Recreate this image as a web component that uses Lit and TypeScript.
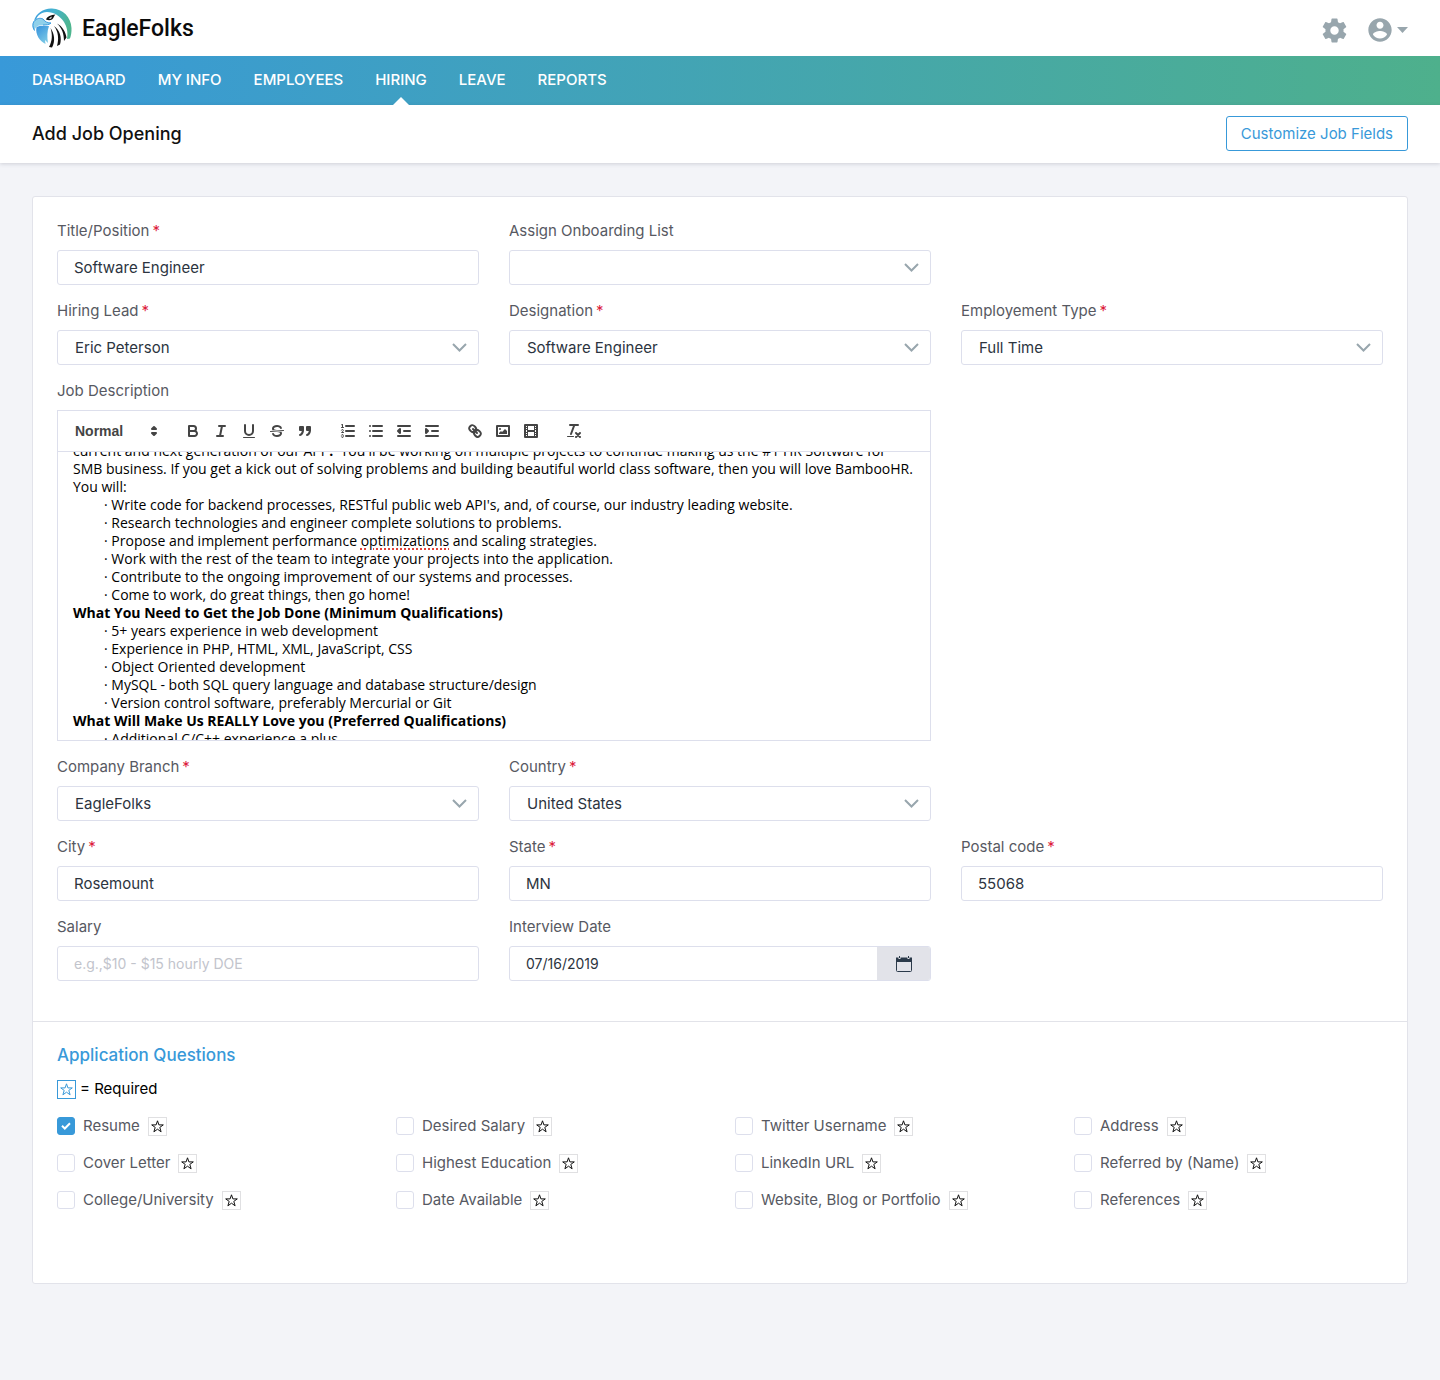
import { LitElement, html, css, svg, nothing } from "lit";
import { customElement, property } from "lit/decorators.js";

const NAV = ["DASHBOARD", "MY INFO", "EMPLOYEES", "HIRING", "LEAVE", "REPORTS"];

const QUESTIONS = [
  "Resume",
  "Desired Salary",
  "Twitter Username",
  "Address",
  "Cover Letter",
  "Highest Education",
  "LinkedIn URL",
  "Referred by (Name)",
  "College/University",
  "Date Available",
  "Website, Blog or Portfolio",
  "References",
];

const sharedStyles = css`
  *,
  *::before,
  *::after {
    box-sizing: border-box;
  }
  button,
  input,
  select {
    font: inherit;
    color: inherit;
    margin: 0;
  }
  button {
    background: none;
    border: 0;
    padding: 0;
    cursor: pointer;
  }
  svg {
    display: block;
  }
`;

@customElement("eagle-header")
export class EagleHeader extends LitElement {
  static styles = [
    sharedStyles,
    css`
      :host {
        display: block;
      }
      .top {
        display: flex;
        align-items: center;
        justify-content: space-between;
        height: 56px;
        padding: 0 32px;
        background: #fff;
      }
      .brand {
        display: flex;
        align-items: center;
        gap: 10px;
        color: #0b0b0b;
        text-decoration: none;
        font: 500 23px/28px Roboto, sans-serif;
      }
      .name {
        padding-top: 2px;
      }
      .tools {
        display: flex;
        align-items: center;
        gap: 17px;
        padding-top: 4px;
        color: #98a6ad;
      }
      .account {
        display: flex;
        align-items: center;
        gap: 3px;
      }
      .nav {
        display: flex;
        gap: 32px;
        height: 49px;
        padding: 0 32px;
        background: linear-gradient(90deg, #3899d9, #4eb08c);
      }
      .link {
        position: relative;
        color: #fff;
        text-decoration: none;
        font-weight: 500;
        font-size: 15px;
        line-height: 48px;
      }
      .link.active::after {
        content: "";
        position: absolute;
        left: 50%;
        bottom: 0;
        margin-left: -8px;
        border: 8px solid transparent;
        border-top: 0;
        border-bottom-color: #fff;
      }
    `,
  ];

  render() {
    return html`
      <header>
        <div class="top">
          <a class="brand" href="#">
            <svg width="40" height="40" viewBox="0 0 40 40" aria-hidden="true">
              <defs>
                <linearGradient id="crest" x1="0" y1="0" x2="1" y2="0.3">
                  <stop offset="0" stop-color="#3b9be0" />
                  <stop offset="0.5" stop-color="#45b3cf" />
                  <stop offset="1" stop-color="#4db58f" />
                </linearGradient>
                <linearGradient id="throat" x1="0" y1="0" x2="0.6" y2="1">
                  <stop offset="0" stop-color="#3390dc" />
                  <stop offset="1" stop-color="#7cc9e6" />
                </linearGradient>
              </defs>
              <path
                fill="url(#crest)"
                d="M2 13C4 5 12 0 20 0.500 31 1 39 9 39.500 20c.2 4-.5 8-1.500 10.500l-3 .5c1-7 0-12-3-17C28 8 22 4 15 4 9 4 5 8 4.500 11Z"
              />
              <path fill="#8fd0ea" d="M1 14C4 10 8 9.500 11 11c2 3 5 4 8 4-2 2-5 2-8 2C6 17 3 19 2.500 23 0 20 0 17 1 14Z" />
              <path fill="none" stroke="#3b9be0" d="M2.500 22.500C.5 19 .5 16 2 13.500 5 10 8 9.800 11 11c2 3 5 4 8 4-2 2-5 2-8 2" />
              <path fill="url(#throat)" d="M4.500 19C9 17 12 18 17 18c-2 5-2 11-1 17l-3-3 .5 4C8 33 3 27 4.500 19Z" />
              <path fill="#111" d="M14 11.500C15 8.500 19 7 23.500 6.500 22 7.500 22 10 20 11.500c-2 1-4 .8-6 0Z" />
              <path fill="#fff" d="M16.500 10.500l3.500-2-1 2.200Z" />
              <g fill="#111">
                <path d="M18.500 20c2 6 2 13-1.500 19l3 .5c3.500-6 2.500-14-1.500-19.500Z" />
                <path d="M22 18c4.500 6 5 13 3 20l3-1.500c2-7 0-14-6-18.500Z" />
                <path d="M25 15.500c5 4.500 7 10.500 7 17.500l2.500-3.500c-1-6-4-11-9.500-14Z" />
              </g>
            </svg>
            <span class="name">EagleFolks</span>
          </a>
          <div class="tools">
            <button aria-label="Settings">
              <svg width="29" height="29" viewBox="0 0 24 24" fill="currentColor" aria-hidden="true">
                <path
                  d="M19.43 12.98c.04-.32.07-.64.07-.98s-.03-.66-.07-.98l2.11-1.65c.19-.15.24-.42.12-.64l-2-3.46c-.12-.22-.39-.3-.61-.22l-2.49 1c-.52-.4-1.08-.73-1.69-.98l-.38-2.65C14.46 2.18 14.25 2 14 2h-4c-.25 0-.46.18-.49.42l-.38 2.65c-.61.25-1.17.59-1.69.98l-2.49-1c-.23-.09-.49 0-.61.22l-2 3.46c-.13.22-.07.49.12.64l2.11 1.65c-.04.32-.07.65-.07.98s.03.66.07.98l-2.11 1.65c-.19.15-.24.42-.12.64l2 3.46c.12.22.39.3.61.22l2.49-1c.52.4 1.08.73 1.69.98l.38 2.65c.03.24.24.42.49.42h4c.25 0 .46-.18.49-.42l.38-2.65c.61-.25 1.17-.59 1.69-.98l2.49 1c.23.09.49 0 .61-.22l2-3.46c.12-.22.07-.49-.12-.64l-2.11-1.65zM12 15.500c-1.930 0-3.500-1.570-3.500-3.500s1.570-3.500 3.500-3.500 3.500 1.570 3.500 3.500-1.570 3.500-3.500 3.500z"
                />
              </svg>
            </button>
            <button class="account" aria-label="Account">
              <svg width="28" height="28" viewBox="0 0 24 24" fill="currentColor" aria-hidden="true">
                <path
                  d="M12 2C6.48 2 2 6.48 2 12s4.48 10 10 10 10-4.48 10-10S17.52 2 12 2zm0 3c1.66 0 3 1.34 3 3s-1.34 3-3 3-3-1.34-3-3 1.34-3 3-3zm0 14.2c-2.5 0-4.71-1.28-6-3.22.03-1.99 4-3.08 6-3.08 1.99 0 5.97 1.09 6 3.08-1.29 1.94-3.5 3.22-6 3.22z"
                />
              </svg>
              <svg width="11" height="6" viewBox="0 0 11 6" fill="currentColor" aria-hidden="true">
                <path d="M0 0h11L5.500 6z" />
              </svg>
            </button>
          </div>
        </div>
        <nav class="nav">
          ${NAV.map(
            (name) => html`<a class="link ${name === "HIRING" ? "active" : ""}" href="#">${name}</a>`,
          )}
        </nav>
      </header>
    `;
  }
}

const lines = (x1: number, ys: number[]) =>
  ys.map((y) => svg`<line class="s" x1=${x1} x2="15" y1=${y} y2=${y}></line>`);

const TOOL_GROUPS = [
  [
    {
      name: "Bold",
      icon: svg`<path class="s" d="M5,4H9.5A2.5,2.5,0,0,1,12,6.500v0A2.5,2.5,0,0,1,9.500,9H5V4Z"/><path class="s" d="M5,9h5.500A2.500,2.500,0,0,1,13,11.500v0A2.500,2.500,0,0,1,10.500,14H5V9Z"/>`,
    },
    {
      name: "Italic",
      icon: svg`<path class="s" d="M7,4H13M5,14H11M8,14L10,4"/>`,
    },
    {
      name: "Underline",
      icon: svg`<path class="s" d="M5,3V9a4.012,4.012,0,0,0,4,4H9a4.012,4.012,0,0,0,4-4V3"/><rect class="f" height="1" rx="0.5" width="12" x="3" y="15"/>`,
    },
    {
      name: "Strikethrough",
      icon: svg`<path class="s t" d="M15.5,8.5L2.5,9.5"/><path class="f" d="M9.007,8C6.542,7.791,6,7.519,6,6.5,6,5.792,7.283,5,9,5c1.571,0,2.765.679,2.969,1.309a1,1,0,0,0,1.9-.617C13.356,4.106,11.354,3,9,3,6.2,3,4,4.538,4,6.5a3.2,3.2,0,0,0,.5,1.843Z"/><path class="f" d="M8.984,10C11.457,10.208,12,10.479,12,11.5c0,0.708-1.283,1.5-3,1.5-1.571,0-2.765-.679-2.969-1.309a1,1,0,1,0-1.9.617C4.644,13.894,6.646,15,9,15c2.8,0,5-1.538,5-3.5a3.2,3.2,0,0,0-.5-1.843Z"/>`,
    },
    {
      name: "Quote",
      icon: svg`<path class="s f" d="M4,5h3v3h-3zM11,5h3v3h-3z"/><path class="s f" d="M7,8c0,4.031-3,5-3,5M14,8c0,4.031-3,5-3,5"/>`,
    },
  ],
  [
    {
      name: "Numbered list",
      icon: svg`${lines(7, [4, 9, 14])}<path class="s t" d="M2.500,5.500H4.500"/><path class="f" d="M3.5,6A0.5,0.5,0,0,1,3,5.5V3.085l-0.276.138A0.5,0.5,0,0,1,2.053,3c-0.124-.247-0.023-0.324.224-0.447l1-.5A0.5,0.5,0,0,1,4,2.5v3A0.5,0.5,0,0,1,3.5,6Z"/><path class="s t" d="M4.5,10.5h-2c0-.234,1.85-1.076,1.85-2.234A0.959,0.959,0,0,0,2.5,8.156"/><path class="s t" d="M2.5,14.846a0.959,0.959,0,0,0,1.85-.109A0.7,0.7,0,0,0,3.75,14a0.688,0.688,0,0,0,.6-0.736,0.959,0.959,0,0,0-1.85-.109"/>`,
    },
    {
      name: "Bulleted list",
      icon: svg`${lines(6, [4, 9, 14])}<path class="s" d="M3,4V4M3,9V9M3,14V14"/>`,
    },
    {
      name: "Decrease indent",
      icon: svg`${lines(3, [4, 14])}${lines(9, [9])}<path class="s f" d="M5 7V11L3 9Z"/>`,
    },
    {
      name: "Increase indent",
      icon: svg`${lines(3, [4, 14])}${lines(9, [9])}<path class="s f" d="M3 7V11L5 9Z"/>`,
    },
  ],
  [
    {
      name: "Link",
      icon: svg`<path class="s" d="M7,7L11,11"/><path class="s" d="M8.9,4.577a3.476,3.476,0,0,1,.36,4.679A3.476,3.476,0,0,1,4.577,8.9C3.185,7.5,2.035,6.4,4.217,4.217S7.5,3.185,8.9,4.577Z"/><path class="s" d="M13.423,9.1a3.476,3.476,0,0,0-4.679-.36,3.476,3.476,0,0,0,.36,4.679c1.392,1.392,2.5,2.542,4.679.36S14.815,10.5,13.423,9.1Z"/>`,
    },
    {
      name: "Image",
      icon: svg`<rect class="s" height="10" width="12" x="3" y="4"/><circle class="f" cx="6" cy="7" r="1"/><path class="f" d="M5 12V11L7 9 8 10 11 7 13 9V12Z"/>`,
    },
    {
      name: "Video",
      icon: svg`<rect class="s" height="12" width="12" x="3" y="3"/><path class="f" d="M5 3h1v12h-1zM12 3h1v12h-1zM5 8h8v2h-8zM3 5h3v1h-3zM3 7h3v1h-3zM3 10h3v1h-3zM3 12h3v1h-3zM12 5h3v1h-3zM12 7h3v1h-3zM12 10h3v1h-3zM12 12h3v1h-3z"/>`,
    },
  ],
  [
    {
      name: "Clear formatting",
      icon: svg`<path class="s" d="M5,3H13M6,12L9.350,3M11,11L15,15M15,11L11,15"/><rect class="f" height="1" rx="0.5" width="7" x="2" y="14"/>`,
    },
  ],
];

@customElement("rich-editor")
export class RichEditor extends LitElement {
  static styles = [
    sharedStyles,
    css`
      :host {
        display: block;
        border: 1px solid #dddfec;
      }
      .toolbar {
        display: flex;
        flex-wrap: wrap;
        gap: 15px;
        padding: 8px;
        border-bottom: 1px solid #dddfec;
        color: #444;
      }
      .group {
        display: flex;
      }
      .tool {
        padding: 3px 5px;
      }
      .icon {
        width: 18px;
        height: 18px;
      }
      .s {
        fill: none;
        stroke: currentColor;
        stroke-linecap: round;
        stroke-linejoin: round;
        stroke-width: 2;
      }
      .f {
        fill: currentColor;
      }
      .t {
        stroke-width: 1;
      }
      .picker {
        display: grid;
        align-items: center;
        width: 98px;
      }
      .picker > * {
        grid-area: 1 / 1;
      }
      .picker .icon {
        justify-self: end;
        margin-right: 1px;
        pointer-events: none;
      }
      .format {
        appearance: none;
        width: 100%;
        height: 24px;
        padding: 0 0 0 9px;
        border: 0;
        background: none;
        font: 700 14px/24px "Liberation Sans", sans-serif;
      }
      .body {
        height: 288px;
        padding: 12px 15px;
        overflow-y: auto;
        scrollbar-width: none;
        outline: 0;
        color: #000;
        font-family: "Open Sans", sans-serif;
        font-size: 14px;
        line-height: 18px;
        white-space: nowrap;
      }
      .body p,
      .body ul {
        margin: 0;
        padding: 0;
      }
      .body ul {
        padding-left: 31px;
        list-style: none;
      }
      .misspelt {
        text-decoration: underline dotted #e0443c 2px;
        text-underline-offset: 2px;
      }
    `,
  ];

  firstUpdated() {
    this.renderRoot.querySelector(".body")!.scrollTop = 22;
  }

  render() {
    return html`
      <div class="toolbar" role="toolbar" aria-label="Formatting">
        <div class="picker">
          <select class="format" aria-label="Text style">
            <option>Normal</option>
          </select>
          <svg class="icon" viewBox="0 0 18 18" aria-hidden="true">
            <path class="s f" d="M7 11L9 13 11 11ZM7 7L9 5 11 7Z" />
          </svg>
        </div>
        ${TOOL_GROUPS.map(
          (group) => html`<div class="group">
            ${group.map(
              (tool) => html`<button class="tool" type="button" aria-label=${tool.name}>
                <svg class="icon" viewBox="0 0 18 18" aria-hidden="true">${tool.icon}</svg>
              </button>`,
            )}
          </div>`,
        )}
      </div>
      <div class="body" contenteditable="true" spellcheck="false" role="textbox" aria-multiline="true" aria-label="Job Description">
        <p>current and next generation of our APP<b>.</b>&nbsp; You'll be working on multiple projects to continue making us the #1 HR Software for</p>
        <p>SMB business. If you get a kick out of solving problems and building beautiful world class software, then you will love BambooHR.</p>
        <p>You will:</p>
        <ul>
          <li>· Write code for backend processes, RESTful public web API's, and, of course, our industry leading website.</li>
          <li>· Research technologies and engineer complete solutions to problems.</li>
          <li>· Propose and implement performance <span class="misspelt">optimizations</span> and scaling strategies.</li>
          <li>· Work with the rest of the team to integrate your projects into the application.</li>
          <li>· Contribute to the ongoing improvement of our systems and processes.</li>
          <li>· Come to work, do great things, then go home!</li>
        </ul>
        <p><b>What You Need to Get the Job Done (Minimum Qualifications)</b></p>
        <ul>
          <li>· 5+ years experience in web development</li>
          <li>· Experience in PHP, HTML, XML, JavaScript, CSS</li>
          <li>· Object Oriented development</li>
          <li>· MySQL - both SQL query language and database structure/design</li>
          <li>· Version control software, preferably Mercurial or Git</li>
        </ul>
        <p><b>What Will Make Us REALLY Love you (Preferred Qualifications)</b></p>
        <ul>
          <li>· Additional C/C++ experience a plus</li>
        </ul>
      </div>
    `;
  }
}

@customElement("form-field")
export class FormField extends LitElement {
  @property() label = "";
  @property() value = "";
  @property() placeholder = "";
  @property() kind: "text" | "select" | "date" = "text";
  @property({ type: Boolean }) required = false;

  static styles = [
    sharedStyles,
    css`
      :host {
        display: flex;
        flex-direction: column;
        gap: 9px;
      }
      .label {
        display: flex;
        gap: 3px;
        line-height: 20px;
        color: #575962;
      }
      .mark {
        color: #dc1c3c;
      }
      .control {
        display: grid;
        grid-template-columns: minmax(0, 1fr) auto;
        height: 35px;
        border: 1px solid #dddfec;
        border-radius: 3px;
        background: #fff;
        color: #2c3440;
        overflow: hidden;
      }
      .box {
        grid-area: 1 / 1 / 2 / 3;
        width: 100%;
        min-width: 0;
        padding: 0 16px;
        border: 0;
        background: none;
        outline: 0;
      }
      select.box {
        appearance: none;
        padding: 0 17px;
      }
      .date .box {
        grid-area: 1 / 1;
        font-size: 14px;
      }
      .box::placeholder {
        color: #c2c4cc;
        font-size: 14px;
        opacity: 1;
      }
      .chevron {
        grid-area: 1 / 2;
        align-self: center;
        margin-right: 11px;
        pointer-events: none;
      }
      .pick {
        display: grid;
        place-items: center;
        width: 53px;
        background: #e2e3e9;
      }
    `,
  ];

  render() {
    return html`
      <label class="label" for="control"
        ><span>${this.label}</span>${this.required ? html`<span class="mark">*</span>` : nothing}</label
      >
      <div class="control ${this.kind}">
        ${this.kind === "select"
          ? html`<select class="box" id="control">
                <option>${this.value}</option>
              </select>
              <svg class="chevron" width="15" height="9" viewBox="0 0 15 9" fill="none" stroke="#98a6ad" stroke-width="2" aria-hidden="true">
                <path d="M1 1l6.500 6.500L14 1" />
              </svg>`
          : html`<input class="box" id="control" type="text" .value=${this.value} placeholder=${this.placeholder} />`}
        ${this.kind === "date"
          ? html`<button class="pick" type="button" aria-label="Open calendar">
              <svg width="18" height="16" viewBox="0 0 18 16" aria-hidden="true">
                <path fill="#2b3a4a" d="M1 1.500h16V6H1z" />
                <path fill="none" stroke="#2b3a4a" d="M1.500 5v9.500q0 1 1 1h13q1 0 1-1V5" />
                <path stroke="#e2e3e9" stroke-width="2" d="M4.500 0v3M13.500 0v3" />
                <path stroke="#2b3a4a" d="M4.500 0v2M13.500 0v2" />
              </svg>
            </button>`
          : nothing}
      </div>
    `;
  }
}

@customElement("app-root")
export class AppRoot extends LitElement {
  static styles = [
    sharedStyles,
    css`
      :host {
        display: block;
        min-height: 100vh;
        background: #f3f4f8;
        font-family: Inter, sans-serif;
        font-size: 15px;
        line-height: 20px;
      }
      .heading {
        display: flex;
        align-items: center;
        justify-content: space-between;
        padding: 11px 32px 12px;
        background: #fff;
        box-shadow: 0 1px 4px rgba(60, 66, 90, 0.2);
      }
      .title {
        margin: 0;
        color: #111;
        font-size: 18px;
        font-weight: 500;
        line-height: 24px;
      }
      .customize {
        height: 35px;
        padding: 0 14px;
        border: 1px solid #3899d9;
        border-radius: 3px;
        color: #3899d9;
      }
      .card {
        margin: 33px 32px 0;
        border: 1px solid #e2e3ea;
        border-radius: 3px;
        background: #fff;
      }
      .fields {
        display: grid;
        grid-template-columns: repeat(3, minmax(0, 1fr));
        gap: 16px 30px;
        padding: 24px 24px 40px;
      }
      .start {
        grid-column-start: 1;
      }
      .description {
        grid-column: 1 / span 2;
        display: flex;
        flex-direction: column;
        gap: 9px;
        color: #575962;
      }
      .questions {
        padding: 21px 24px 73px;
        border-top: 1px solid #e2e3e9;
      }
      .subtitle {
        margin: 0;
        color: #3899d9;
        font-size: 17px;
        font-weight: 500;
        line-height: 24px;
      }
      .legend {
        display: flex;
        align-items: center;
        gap: 4px;
        margin: 12px 0 17px;
        color: #000;
      }
      .grid {
        display: grid;
        grid-template-columns: repeat(4, minmax(0, 1fr));
        gap: 17px 30px;
      }
      .question {
        display: flex;
        align-items: center;
        gap: 8px;
        color: #575962;
      }
      .choice {
        display: flex;
        align-items: center;
        gap: 8px;
      }
      .tick {
        display: grid;
        width: 18px;
        height: 18px;
      }
      .tick > * {
        grid-area: 1 / 1;
      }
      .check {
        appearance: none;
        width: 18px;
        height: 18px;
        border: 1px solid #dddfec;
        border-radius: 3px;
        background: #fff;
      }
      .check:checked {
        border-color: #3899d9;
        background: #3899d9;
      }
      .mark {
        place-self: center;
        pointer-events: none;
      }
      .star {
        display: grid;
        place-items: center;
        width: 19px;
        height: 19px;
        border: 1px solid #e0e0e2;
        color: #111;
      }
      .star.key {
        border-color: #3899d9;
        color: #3899d9;
      }
    `,
  ];

  private starIcon() {
    return html`<svg width="15" height="15" viewBox="0 0 15 15" fill="none" stroke="currentColor" aria-hidden="true">
      <path d="M7.500 1.800L8.900 5.900H13.300L9.800 8.400 11.100 12.800 7.500 10.200 3.900 12.800 5.200 8.400 1.700 5.900H6.100Z" />
    </svg>`;
  }

  render() {
    return html`
      <eagle-header></eagle-header>
      <div class="heading">
        <h1 class="title">Add Job Opening</h1>
        <button class="customize" type="button">Customize Job Fields</button>
      </div>
      <main class="card">
        <div class="fields">
          <form-field label="Title/Position" value="Software Engineer" required></form-field>
          <form-field label="Assign Onboarding List" kind="select"></form-field>
          <form-field class="start" label="Hiring Lead" kind="select" value="Eric Peterson" required></form-field>
          <form-field label="Designation" kind="select" value="Software Engineer" required></form-field>
          <form-field label="Employement Type" kind="select" value="Full Time" required></form-field>
          <div class="description">
            <span>Job Description</span>
            <rich-editor></rich-editor>
          </div>
          <form-field class="start" label="Company Branch" kind="select" value="EagleFolks" required></form-field>
          <form-field label="Country" kind="select" value="United States" required></form-field>
          <form-field class="start" label="City" value="Rosemount" required></form-field>
          <form-field label="State" value="MN" required></form-field>
          <form-field label="Postal code" value="55068" required></form-field>
          <form-field label="Salary" placeholder="e.g.,$10 - $15 hourly DOE"></form-field>
          <form-field label="Interview Date" kind="date" value="07/16/2019"></form-field>
        </div>
        <section class="questions">
          <h2 class="subtitle">Application Questions</h2>
          <div class="legend">
            <span class="star key">${this.starIcon()}</span>
            <span>= Required</span>
          </div>
          <div class="grid">
            ${QUESTIONS.map(
              (name, index) => html`<div class="question">
                <label class="choice">
                  <span class="tick">
                    <input class="check" type="checkbox" ?checked=${index === 0} />
                    ${index === 0
                      ? html`<svg class="mark" width="10" height="8" viewBox="0 0 10 8" fill="none" stroke="#fff" stroke-width="2" aria-hidden="true">
                          <path d="M1 3.800L3.800 6.500 9 1.200" />
                        </svg>`
                      : nothing}
                  </span>
                  <span>${name}</span>
                </label>
                <button class="star" type="button" aria-label="Mark ${name} as required">${this.starIcon()}</button>
              </div>`,
            )}
          </div>
        </section>
      </main>
    `;
  }
}
